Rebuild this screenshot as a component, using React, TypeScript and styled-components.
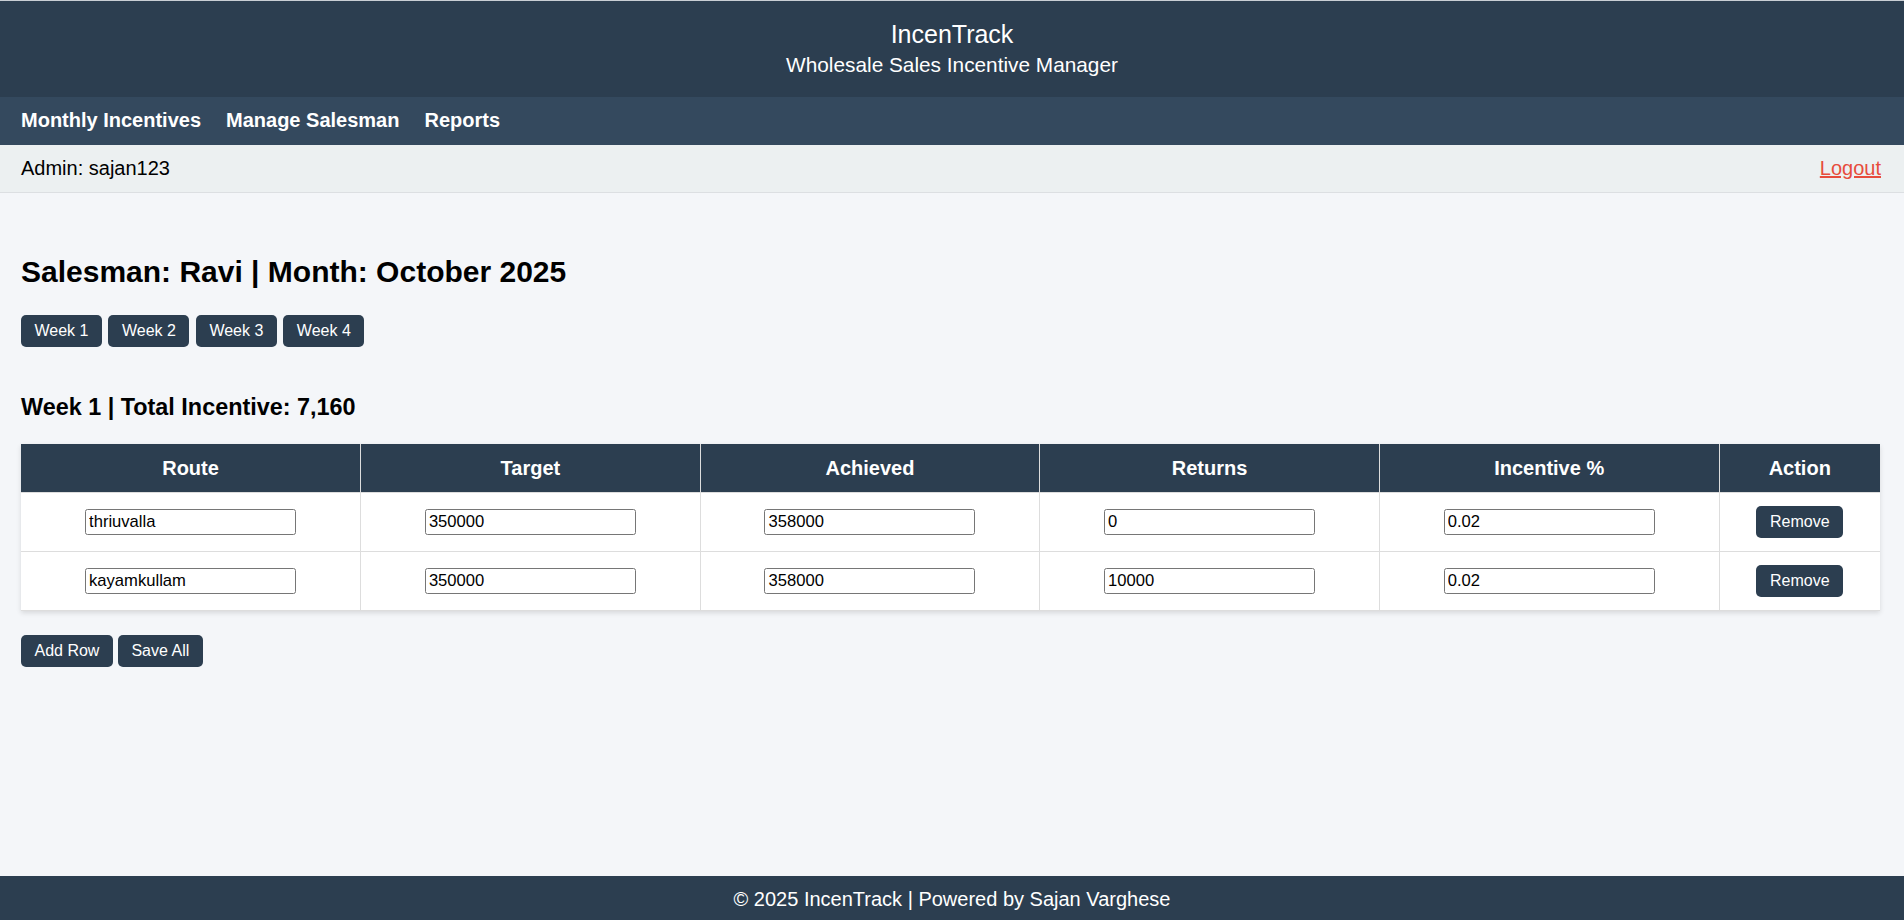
import React from "react";
import styled, { createGlobalStyle } from "styled-components";

const GlobalStyle = createGlobalStyle`
  * { box-sizing: border-box; }
  html, body { margin: 0; padding: 0; }
  body {
    font-family: "Liberation Sans", Arial, sans-serif;
    background: #f4f6f9;
    color: #000;
  }
`;

const Page = styled.div`
  min-height: 100vh;
  display: flex;
  flex-direction: column;
`;

const Header = styled.header`
  background: #2c3e50;
  color: #fff;
  text-align: center;
  border-top: 1px solid #c9ced4;
  padding: 19px 20px 20px;
`;

const Title = styled.h1`
  margin: 0;
  font-size: 25px;
  font-weight: 400;
`;

const Subtitle = styled.p`
  margin: 4px 0 0;
  font-size: 20.8px;
`;

const Nav = styled.nav`
  background: #34495e;
  padding: 12px 20px 13px 21px;
  display: flex;
  gap: 25px;
`;

const NavLink = styled.a`
  color: #fff;
  font-weight: 700;
  font-size: 20px;
  text-decoration: none;
`;

const AdminBar = styled.div`
  background: #ecf0f1;
  border-bottom: 1px solid #dcdfe2;
  padding: 12px 23px 12px 21px;
  display: flex;
  justify-content: space-between;
  font-size: 20px;
`;

const Logout = styled.a`
  color: #e74c3c;
  text-decoration: underline;
`;

const Main = styled.main`
  flex: 1;
  padding: 37px 24px 0 21px;
`;

const Heading = styled.h2`
  margin: 25px 0 26px;
  font-size: 30px;
  font-weight: 700;
`;

const ButtonRow = styled.div<{ $gap: number; $mt?: number }>`
  display: flex;
  gap: ${(p) => p.$gap}px;
  margin-top: ${(p) => p.$mt ?? 0}px;
`;

const Button = styled.button`
  background: #2c3e50;
  color: #fff;
  border: none;
  border-radius: 5px;
  height: 32px;
  padding: 0 13.5px;
  font-family: "Liberation Sans", Arial, sans-serif;
  font-size: 16px;
  cursor: pointer;
`;

const SubHeading = styled.h3`
  margin: 47px 0 23px;
  font-size: 23.4px;
  font-weight: 700;
`;

const Table = styled.table`
  width: 100%;
  border-collapse: collapse;
  table-layout: fixed;
  background: #fff;
  box-shadow: 0 2px 5px rgba(0, 0, 0, 0.12);
`;

const Th = styled.th`
  background: #2c3e50;
  color: #fff;
  font-size: 20px;
  font-weight: 700;
  padding: 12.5px 10px;
  border: 1px solid #dddddd;
  border-top: none;
  text-align: center;
  &:first-child { border-left: none; }
  &:last-child { border-right: none; }
`;

const Td = styled.td`
  border: 1px solid #dddddd;
  padding: 12.5px 10px;
  text-align: center;
  height: 59px;
  &:first-child { border-left: none; }
  &:last-child { border-right: none; }
`;

const Input = styled.input`
  width: 211px;
  height: 26px;
  font-family: "Liberation Sans", Arial, sans-serif;
  font-size: 16.6px;
  padding: 1px 3px;
  border: 1px solid #767676;
  border-radius: 2.5px;
  background: #fff;
  color: #000;
  vertical-align: middle;
`;

const Footer = styled.footer`
  background: #2c3e50;
  color: #fff;
  text-align: center;
  font-size: 20px;
  padding: 12px 0 9px;
`;

type Row = { route: string; target: string; achieved: string; returns: string; pct: string };

const rows: Row[] = [
  { route: "thriuvalla", target: "350000", achieved: "358000", returns: "0", pct: "0.02" },
  { route: "kayamkullam", target: "350000", achieved: "358000", returns: "10000", pct: "0.02" },
];

const columns = ["Route", "Target", "Achieved", "Returns", "Incentive %", "Action"];

export default function App() {
  return (
    <Page>
      <GlobalStyle />
      <Header>
        <Title>IncenTrack</Title>
        <Subtitle>Wholesale Sales Incentive Manager</Subtitle>
      </Header>
      <Nav>
        <NavLink href="#">Monthly Incentives</NavLink>
        <NavLink href="#">Manage Salesman</NavLink>
        <NavLink href="#">Reports</NavLink>
      </Nav>
      <AdminBar>
        <span>Admin: sajan123</span>
        <Logout href="#">Logout</Logout>
      </AdminBar>
      <Main>
        <Heading>Salesman: Ravi | Month: October 2025</Heading>
        <ButtonRow $gap={6.5}>
          <Button>Week 1</Button>
          <Button>Week 2</Button>
          <Button>Week 3</Button>
          <Button>Week 4</Button>
        </ButtonRow>
        <SubHeading>Week 1 | Total Incentive: 7,160</SubHeading>
        <Table>
          <colgroup>
            <col />
            <col />
            <col />
            <col />
            <col />
            <col style={{ width: "161px" }} />
          </colgroup>
          <thead>
            <tr>
              {columns.map((c) => (
                <Th key={c}>{c}</Th>
              ))}
            </tr>
          </thead>
          <tbody>
            {rows.map((r, i) => (
              <tr key={i}>
                <Td><Input defaultValue={r.route} /></Td>
                <Td><Input defaultValue={r.target} /></Td>
                <Td><Input defaultValue={r.achieved} /></Td>
                <Td><Input defaultValue={r.returns} /></Td>
                <Td><Input defaultValue={r.pct} /></Td>
                <Td><Button>Remove</Button></Td>
              </tr>
            ))}
          </tbody>
        </Table>
        <ButtonRow $gap={5} $mt={24}>
          <Button>Add Row</Button>
          <Button>Save All</Button>
        </ButtonRow>
      </Main>
      <Footer>© 2025 IncenTrack | Powered by Sajan Varghese</Footer>
    </Page>
  );
}
